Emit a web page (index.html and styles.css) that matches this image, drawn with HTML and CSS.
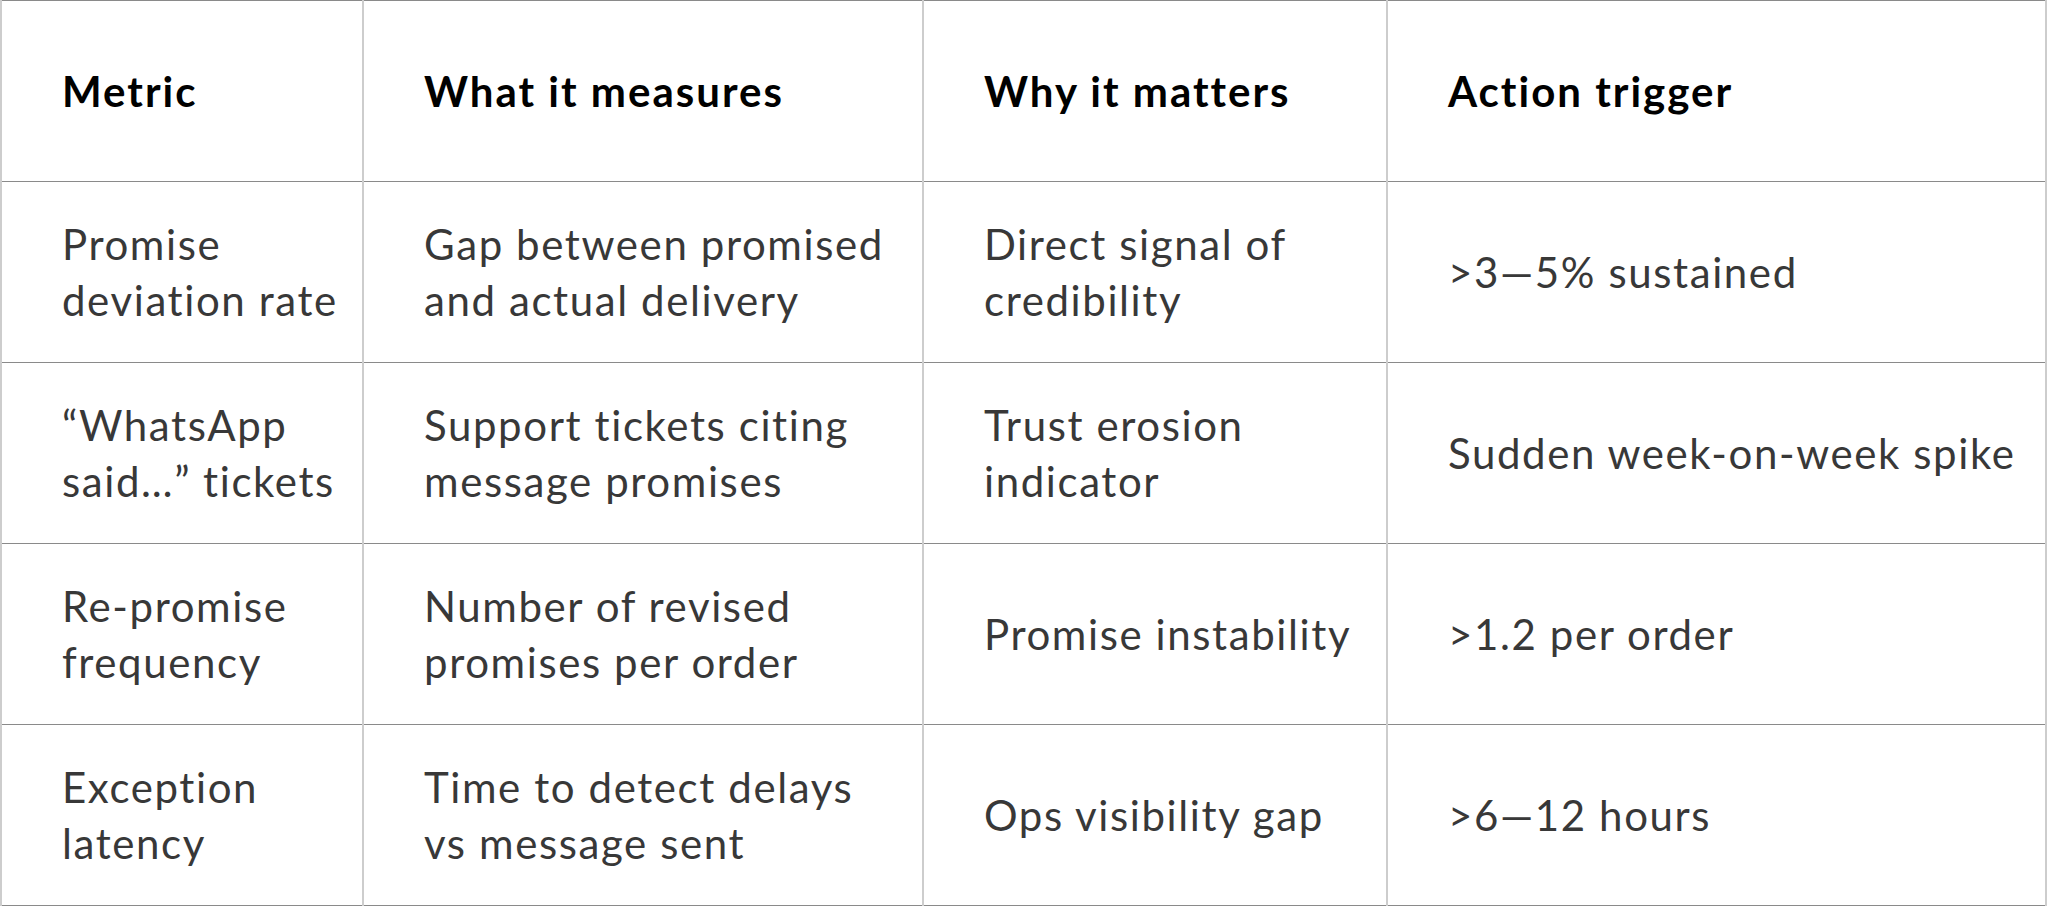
FILE: index.html
```html
<!DOCTYPE html>
<html lang="en">
<head>
<meta charset="utf-8">
<title>Metrics</title>
<link rel="stylesheet" href="styles.css">
</head>
<body>
<table class="metrics">
  <colgroup>
    <col class="c1"><col class="c2"><col class="c3"><col class="c4">
  </colgroup>
  <thead>
    <tr>
      <th>Metric</th>
      <th>What it measures</th>
      <th>Why it matters</th>
      <th>Action trigger</th>
    </tr>
  </thead>
  <tbody>
    <tr>
      <td>Promise<br>deviation rate</td>
      <td>Gap between promised<br>and actual delivery</td>
      <td>Direct signal of<br>credibility</td>
      <td>&gt;3—5% sustained</td>
    </tr>
    <tr>
      <td>“WhatsApp<br>said…” tickets</td>
      <td>Support tickets citing<br>message promises</td>
      <td>Trust erosion<br>indicator</td>
      <td>Sudden week-on-week spike</td>
    </tr>
    <tr>
      <td>Re-promise<br>frequency</td>
      <td>Number of revised<br>promises per order</td>
      <td>Promise instability</td>
      <td>&gt;1.2 per order</td>
    </tr>
    <tr>
      <td>Exception<br>latency</td>
      <td>Time to detect delays<br>vs message sent</td>
      <td>Ops visibility gap</td>
      <td>&gt;6—12 hours</td>
    </tr>
  </tbody>
</table>
</body>
</html>
```
FILE: styles.css
```css
html, body {
  margin: 0;
  padding: 0;
  background: #ffffff;
}

.metrics {
  width: 2047px;
  border-collapse: collapse;
  table-layout: fixed;
  font-family: Lato, "Liberation Sans", sans-serif;
  font-size: 42px;
  line-height: 56px;
  letter-spacing: 1.6px;
  color: #383838;
  border-top: 1px solid #8a8a8a;
}

.c1 { width: 362px; }
.c2 { width: 560px; }
.c3 { width: 464px; }
.c4 { width: auto; }

.metrics th,
.metrics td {
  height: 181px;
  padding: 0 10px 0 60px;
  text-align: left;
  vertical-align: middle;
  white-space: nowrap;
  border-left: 2px solid #cdcdcd;
  border-right: 2px solid #cdcdcd;
  border-bottom: 1px solid #8a8a8a;
  box-sizing: border-box;
}

.metrics th {
  color: #000000;
  font-weight: 700;
  letter-spacing: 2px;
}
```
